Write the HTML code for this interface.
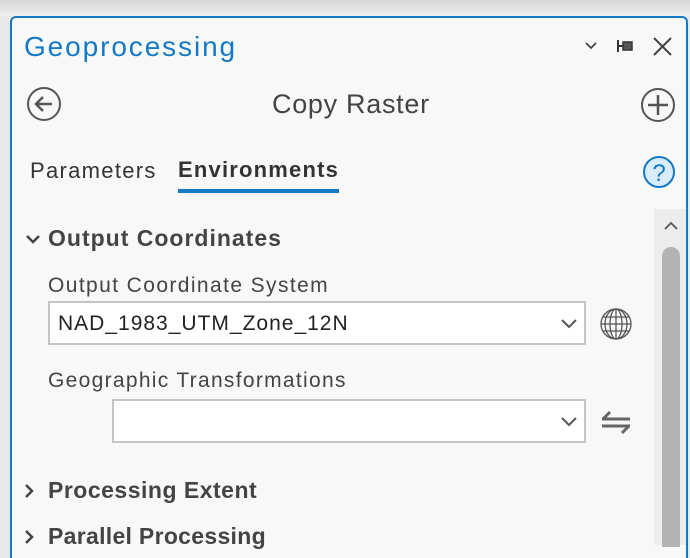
<!DOCTYPE html>
<html><head><style>
body{margin:0;width:690px;height:545px;overflow:hidden;background:#e9e9e9;font-family:"Liberation Sans",sans-serif;position:relative}
.top{position:absolute;left:0;top:0;width:690px;height:16px;background:linear-gradient(#d6d6d6,#f0f0f0)}
.panel{position:absolute;left:10px;top:16px;width:674px;height:540px;border:2px solid #1479c6;border-bottom:none;border-radius:6px 6px 0 0;background:#f8f8f8}
.t{position:absolute;white-space:nowrap;color:#333}
.scroll{position:absolute;left:654px;top:209px;width:32px;height:336px;background:#ececec}
.thumb{position:absolute;left:662px;top:247px;width:18px;height:300px;background:#b3b3b3;border-radius:9px 9px 0 0}
.box{position:absolute;background:#fff;border:2px solid #c4c4c4;box-sizing:border-box}
</style></head><body>
<div class="top"></div>
<div class="panel"></div>
<div class="t" style="left:24px;top:31px;font-size:28px;color:#1479c6;letter-spacing:1.9px">Geoprocessing</div>
<svg style="position:absolute;left:583px;top:36px" width="95" height="22" viewBox="0 0 95 22">
<path d="M3 7l5 5 5-5" stroke="#444" stroke-width="1.8" fill="none"/>
<path d="M35 4v12M35 10h5" stroke="#333" stroke-width="2" fill="none"/>
<rect x="40" y="6" width="9" height="8" fill="#555" stroke="#333" stroke-width="1.5"/>
<path d="M71 2l17 17M88 2L71 19" stroke="#444" stroke-width="2" fill="none"/>
</svg>
<svg style="position:absolute;left:26px;top:86px" width="38" height="38"><circle cx="18" cy="18" r="16" stroke="#555" stroke-width="2" fill="none"/><path d="M26 18H10M17 11l-7 7 7 7" stroke="#555" stroke-width="2.5" fill="none"/></svg>
<div class="t" style="left:272px;top:89px;font-size:27px;color:#444;letter-spacing:0.7px">Copy Raster</div>
<svg style="position:absolute;left:639px;top:86px" width="38" height="38"><circle cx="19" cy="19" r="16" stroke="#555" stroke-width="2" fill="none"/><path d="M19 9v20M9 19h20" stroke="#555" stroke-width="2.5" fill="none"/></svg>
<div class="t" style="left:30px;top:158px;font-size:22px;color:#333;letter-spacing:1.3px">Parameters</div>
<div class="t" style="left:178px;top:157px;font-size:22px;color:#333;font-weight:bold;letter-spacing:1.2px">Environments</div>
<div style="position:absolute;left:178px;top:189px;width:161px;height:4px;background:#1479c6"></div>
<svg style="position:absolute;left:642px;top:155px" width="36" height="36"><circle cx="17" cy="17" r="15" fill="#d9ecfb" stroke="#1479c6" stroke-width="2"/><text x="17" y="26" font-size="24" text-anchor="middle" fill="#1479c6" font-family="Liberation Sans">?</text></svg>
<div class="scroll"></div><div class="thumb"></div>
<svg style="position:absolute;left:663px;top:220px" width="16" height="12"><path d="M2 9l6-6 6 6" stroke="#555" stroke-width="1.8" fill="none"/></svg>
<svg style="position:absolute;left:24px;top:230px" width="18" height="18"><path d="M3 6l6 6 6-6" stroke="#444" stroke-width="2.5" fill="none"/></svg>
<div class="t" style="left:48px;top:225px;font-size:23px;font-weight:bold;color:#444;letter-spacing:1px">Output Coordinates</div>
<div class="t" style="left:48px;top:274px;font-size:21px;color:#444;letter-spacing:1.4px">Output Coordinate System</div>
<div class="box" style="left:48px;top:301px;width:538px;height:44px"></div>
<div class="t" style="left:58px;top:312px;font-size:21px;color:#222;letter-spacing:1px">NAD_1983_UTM_Zone_12N</div>
<svg style="position:absolute;left:560px;top:318px" width="18" height="12"><path d="M2 2l7 7 7-7" stroke="#555" stroke-width="2" fill="none"/></svg>
<svg style="position:absolute;left:598px;top:306px" width="36" height="36" viewBox="0 0 36 36"><g stroke="#555" stroke-width="1.3" fill="none"><circle cx="18" cy="18" r="15"/><ellipse cx="18" cy="18" rx="6" ry="15"/><ellipse cx="18" cy="18" rx="11" ry="15"/><path d="M18 3v30M3 18h30M5 11h26M5 25h26"/></g></svg>
<div class="t" style="left:48px;top:369px;font-size:21px;color:#444;letter-spacing:1.3px">Geographic Transformations</div>
<div class="box" style="left:112px;top:399px;width:474px;height:44px"></div>
<svg style="position:absolute;left:560px;top:416px" width="18" height="12"><path d="M2 2l7 7 7-7" stroke="#555" stroke-width="2" fill="none"/></svg>
<svg style="position:absolute;left:600px;top:408px" width="32" height="28"><path d="M2 11h28M2 18h28M10 4l-7 7M22 25l7-7" stroke="#666" stroke-width="3" fill="none"/></svg>
<svg style="position:absolute;left:22px;top:482px" width="14" height="18"><path d="M4 3l6 6-6 6" stroke="#444" stroke-width="2.5" fill="none"/></svg>
<div class="t" style="left:48px;top:477px;font-size:23px;font-weight:bold;color:#444;letter-spacing:0.5px">Processing Extent</div>
<svg style="position:absolute;left:22px;top:528px" width="14" height="18"><path d="M4 3l6 6-6 6" stroke="#444" stroke-width="2.5" fill="none"/></svg>
<div class="t" style="left:48px;top:523px;font-size:23px;font-weight:bold;color:#444;letter-spacing:0.3px">Parallel Processing</div>
</body></html>
